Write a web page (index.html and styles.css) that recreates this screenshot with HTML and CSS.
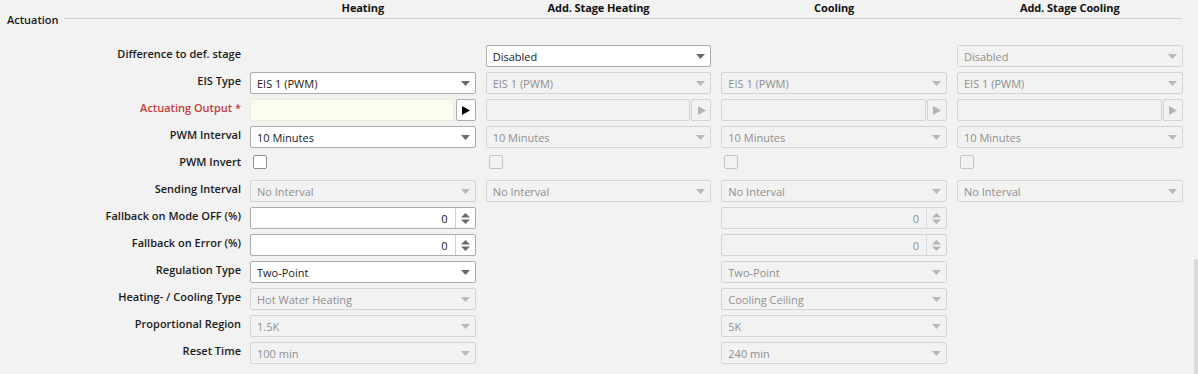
FILE: index.html
```html
<!DOCTYPE html>
<html>
<head>
<meta charset="utf-8">
<link rel="stylesheet" href="styles.css">
</head>
<body>
<div class="page">
  <div class="heads">
    <div></div>
    <div class="head">Heating</div>
    <div class="head">Add. Stage Heating</div>
    <div class="head">Cooling</div>
    <div class="head">Add. Stage Cooling</div>
  </div>
  <div class="legend"><span class="legend-text">Actuation</span><span class="legend-line"></span></div>
  <div class="form">
    <div class="label">Difference to def. stage</div>
    <div></div>
    <div class="sel"><span>Disabled</span><svg class="arr" width="9" height="5" viewBox="0 0 9 5"><polygon points="0,0 9,0 4.5,5"/></svg></div>
    <div></div>
    <div class="sel dis"><span>Disabled</span><svg class="arr" width="9" height="5" viewBox="0 0 9 5"><polygon points="0,0 9,0 4.5,5"/></svg></div>

    <div class="label">EIS Type</div>
    <div class="sel"><span>EIS 1 (PWM)</span><svg class="arr" width="9" height="5" viewBox="0 0 9 5"><polygon points="0,0 9,0 4.5,5"/></svg></div>
    <div class="sel dis"><span>EIS 1 (PWM)</span><svg class="arr" width="9" height="5" viewBox="0 0 9 5"><polygon points="0,0 9,0 4.5,5"/></svg></div>
    <div class="sel dis"><span>EIS 1 (PWM)</span><svg class="arr" width="9" height="5" viewBox="0 0 9 5"><polygon points="0,0 9,0 4.5,5"/></svg></div>
    <div class="sel dis"><span>EIS 1 (PWM)</span><svg class="arr" width="9" height="5" viewBox="0 0 9 5"><polygon points="0,0 9,0 4.5,5"/></svg></div>

    <div class="label req">Actuating Output *</div>
    <div class="pick"><div class="pick-in req-in"></div><div class="pick-btn"><svg width="8" height="9" viewBox="0 0 8 9"><polygon points="0,0 8,4.5 0,9"/></svg></div></div>
    <div class="pick dis"><div class="pick-in"></div><div class="pick-btn"><svg width="8" height="9" viewBox="0 0 8 9"><polygon points="0,0 8,4.5 0,9"/></svg></div></div>
    <div class="pick dis"><div class="pick-in"></div><div class="pick-btn"><svg width="8" height="9" viewBox="0 0 8 9"><polygon points="0,0 8,4.5 0,9"/></svg></div></div>
    <div class="pick dis"><div class="pick-in"></div><div class="pick-btn"><svg width="8" height="9" viewBox="0 0 8 9"><polygon points="0,0 8,4.5 0,9"/></svg></div></div>

    <div class="label">PWM Interval</div>
    <div class="sel"><span>10 Minutes</span><svg class="arr" width="9" height="5" viewBox="0 0 9 5"><polygon points="0,0 9,0 4.5,5"/></svg></div>
    <div class="sel dis"><span>10 Minutes</span><svg class="arr" width="9" height="5" viewBox="0 0 9 5"><polygon points="0,0 9,0 4.5,5"/></svg></div>
    <div class="sel dis"><span>10 Minutes</span><svg class="arr" width="9" height="5" viewBox="0 0 9 5"><polygon points="0,0 9,0 4.5,5"/></svg></div>
    <div class="sel dis"><span>10 Minutes</span><svg class="arr" width="9" height="5" viewBox="0 0 9 5"><polygon points="0,0 9,0 4.5,5"/></svg></div>

    <div class="label">PWM Invert</div>
    <div class="chk-cell"><span class="chk"></span></div>
    <div class="chk-cell"><span class="chk dis"></span></div>
    <div class="chk-cell"><span class="chk dis"></span></div>
    <div class="chk-cell"><span class="chk dis"></span></div>

    <div class="label">Sending Interval</div>
    <div class="sel dis"><span>No Interval</span><svg class="arr" width="9" height="5" viewBox="0 0 9 5"><polygon points="0,0 9,0 4.5,5"/></svg></div>
    <div class="sel dis"><span>No Interval</span><svg class="arr" width="9" height="5" viewBox="0 0 9 5"><polygon points="0,0 9,0 4.5,5"/></svg></div>
    <div class="sel dis"><span>No Interval</span><svg class="arr" width="9" height="5" viewBox="0 0 9 5"><polygon points="0,0 9,0 4.5,5"/></svg></div>
    <div class="sel dis"><span>No Interval</span><svg class="arr" width="9" height="5" viewBox="0 0 9 5"><polygon points="0,0 9,0 4.5,5"/></svg></div>

    <div class="label">Fallback on Mode OFF (%)</div>
    <div class="spin"><span class="spin-val">0</span><span class="spin-btn"><svg width="9" height="11" viewBox="0 0 9 11"><polygon points="4.5,0 9,4.5 0,4.5"/><polygon points="0,6.5 9,6.5 4.5,11"/></svg></span></div>
    <div></div>
    <div class="spin dis"><span class="spin-val">0</span><span class="spin-btn"><svg width="9" height="11" viewBox="0 0 9 11"><polygon points="4.5,0 9,4.5 0,4.5"/><polygon points="0,6.5 9,6.5 4.5,11"/></svg></span></div>
    <div></div>

    <div class="label">Fallback on Error (%)</div>
    <div class="spin"><span class="spin-val">0</span><span class="spin-btn"><svg width="9" height="11" viewBox="0 0 9 11"><polygon points="4.5,0 9,4.5 0,4.5"/><polygon points="0,6.5 9,6.5 4.5,11"/></svg></span></div>
    <div></div>
    <div class="spin dis"><span class="spin-val">0</span><span class="spin-btn"><svg width="9" height="11" viewBox="0 0 9 11"><polygon points="4.5,0 9,4.5 0,4.5"/><polygon points="0,6.5 9,6.5 4.5,11"/></svg></span></div>
    <div></div>

    <div class="label">Regulation Type</div>
    <div class="sel"><span>Two-Point</span><svg class="arr" width="9" height="5" viewBox="0 0 9 5"><polygon points="0,0 9,0 4.5,5"/></svg></div>
    <div></div>
    <div class="sel dis"><span>Two-Point</span><svg class="arr" width="9" height="5" viewBox="0 0 9 5"><polygon points="0,0 9,0 4.5,5"/></svg></div>
    <div></div>

    <div class="label">Heating- / Cooling Type</div>
    <div class="sel dis"><span>Hot Water Heating</span><svg class="arr" width="9" height="5" viewBox="0 0 9 5"><polygon points="0,0 9,0 4.5,5"/></svg></div>
    <div></div>
    <div class="sel dis"><span>Cooling Ceiling</span><svg class="arr" width="9" height="5" viewBox="0 0 9 5"><polygon points="0,0 9,0 4.5,5"/></svg></div>
    <div></div>

    <div class="label">Proportional Region</div>
    <div class="sel dis"><span>1.5K</span><svg class="arr" width="9" height="5" viewBox="0 0 9 5"><polygon points="0,0 9,0 4.5,5"/></svg></div>
    <div></div>
    <div class="sel dis"><span>5K</span><svg class="arr" width="9" height="5" viewBox="0 0 9 5"><polygon points="0,0 9,0 4.5,5"/></svg></div>
    <div></div>

    <div class="label">Reset Time</div>
    <div class="sel dis"><span>100 min</span><svg class="arr" width="9" height="5" viewBox="0 0 9 5"><polygon points="0,0 9,0 4.5,5"/></svg></div>
    <div></div>
    <div class="sel dis"><span>240 min</span><svg class="arr" width="9" height="5" viewBox="0 0 9 5"><polygon points="0,0 9,0 4.5,5"/></svg></div>
    <div></div>
  </div>
  <div class="scroll-thumb"></div>
</div>
</body>
</html>
```

FILE: styles.css
```css
html, body {
  margin: 0;
  padding: 0;
}
body {
  background: #f2f2f2;
  font-family: "Open Sans", "Noto Sans", sans-serif;
  font-size: 11px;
  color: #1a1a1a;
  width: 1198px;
  height: 374px;
  overflow: hidden;
}
.page {
  position: relative;
  width: 1198px;
  height: 374px;
}
.heads,
.form {
  display: grid;
  grid-template-columns: 240px repeat(4, 225.67px);
  column-gap: 10px;
}
.heads {
  height: 16px;
  line-height: 16px;
}
.head {
  text-align: center;
  font-weight: 700;
  color: #111;
  letter-spacing: -0.1px;
}
.legend {
  display: flex;
  align-items: center;
  gap: 5px;
  padding: 0 16px 0 7px;
  height: 8px;
  margin-top: -2px;
}
.legend-text {
  font-weight: 600;
  line-height: 16px;
  position: relative;
  top: 2px;
}
.legend-line {
  flex: 1;
  height: 1px;
  background: #d2d2d2;
}
.form {
  margin-top: 23px;
  grid-auto-rows: 22px;
  row-gap: 5px;
}
.label {
  text-align: right;
  font-weight: 600;
  line-height: 18px;
  white-space: nowrap;
  margin-right: -1px;
}
.label.req {
  color: #c63a3a;
}
.sel {
  box-sizing: border-box;
  height: 22px;
  border: 1px solid #acacac;
  border-radius: 2px;
  background: #fff;
  display: flex;
  align-items: center;
  justify-content: space-between;
  padding: 0 5px 0 6px;
  white-space: nowrap;
}
.arr {
  fill: #6a6a6a;
  flex: none;
}
.sel.dis {
  border-color: #d4d4d4;
  background: #f2f2f2;
  color: #8f8f8f;
}
.sel.dis .arr {
  fill: #b9b9b9;
}
.pick {
  display: flex;
  gap: 2px;
}
.pick-in {
  flex: 1;
  box-sizing: border-box;
  height: 22px;
  border: 1px solid #ecebdc;
  border-radius: 2px;
  background: #fdfcf0;
}
.pick-in.req-in {
  border-color: #eeecd8;
}
.pick-btn {
  box-sizing: border-box;
  width: 20px;
  height: 22px;
  border: 1px solid #acacac;
  border-radius: 2px;
  background: #fff;
  display: flex;
  align-items: center;
  justify-content: center;
}
.pick-btn svg {
  fill: #000;
  margin-left: 1px;
}
.pick.dis {
  gap: 1px;
}
.pick.dis .pick-in {
  border-color: #d4d4d4;
  background: #f2f2f2;
}
.pick.dis .pick-btn {
  border-color: #d4d4d4;
  background: #f2f2f2;
}
.pick.dis .pick-btn svg {
  fill: #b3b3b3;
}
.chk-cell {
  display: flex;
  align-items: flex-start;
  padding: 2px 0 0 3px;
}
.chk {
  box-sizing: border-box;
  width: 14px;
  height: 14px;
  border: 1px solid #8e8e8e;
  border-radius: 2px;
  background: #fff;
}
.chk.dis {
  border-color: #c4c4c4;
  background: #f2f2f2;
}
.spin {
  box-sizing: border-box;
  height: 22px;
  border: 1px solid #acacac;
  border-radius: 2px;
  background: #fff;
  display: flex;
  align-items: stretch;
}
.spin-val {
  flex: 1;
  text-align: right;
  padding-right: 7px;
  line-height: 21px;
}
.spin-btn {
  width: 19px;
  border-left: 1px solid #d0d0d0;
  display: flex;
  align-items: center;
  justify-content: center;
}
.spin-btn svg {
  fill: #6a6a6a;
}
.spin.dis {
  border-color: #d4d4d4;
  background: #f2f2f2;
  color: #8f8f8f;
}
.spin.dis .spin-btn {
  border-left-color: #dcdcdc;
}
.spin.dis .spin-btn svg {
  fill: #b3b3b3;
}
.scroll-thumb {
  position: absolute;
  right: 0;
  top: 259px;
  width: 4px;
  bottom: 0;
  background: #dadada;
}
```
